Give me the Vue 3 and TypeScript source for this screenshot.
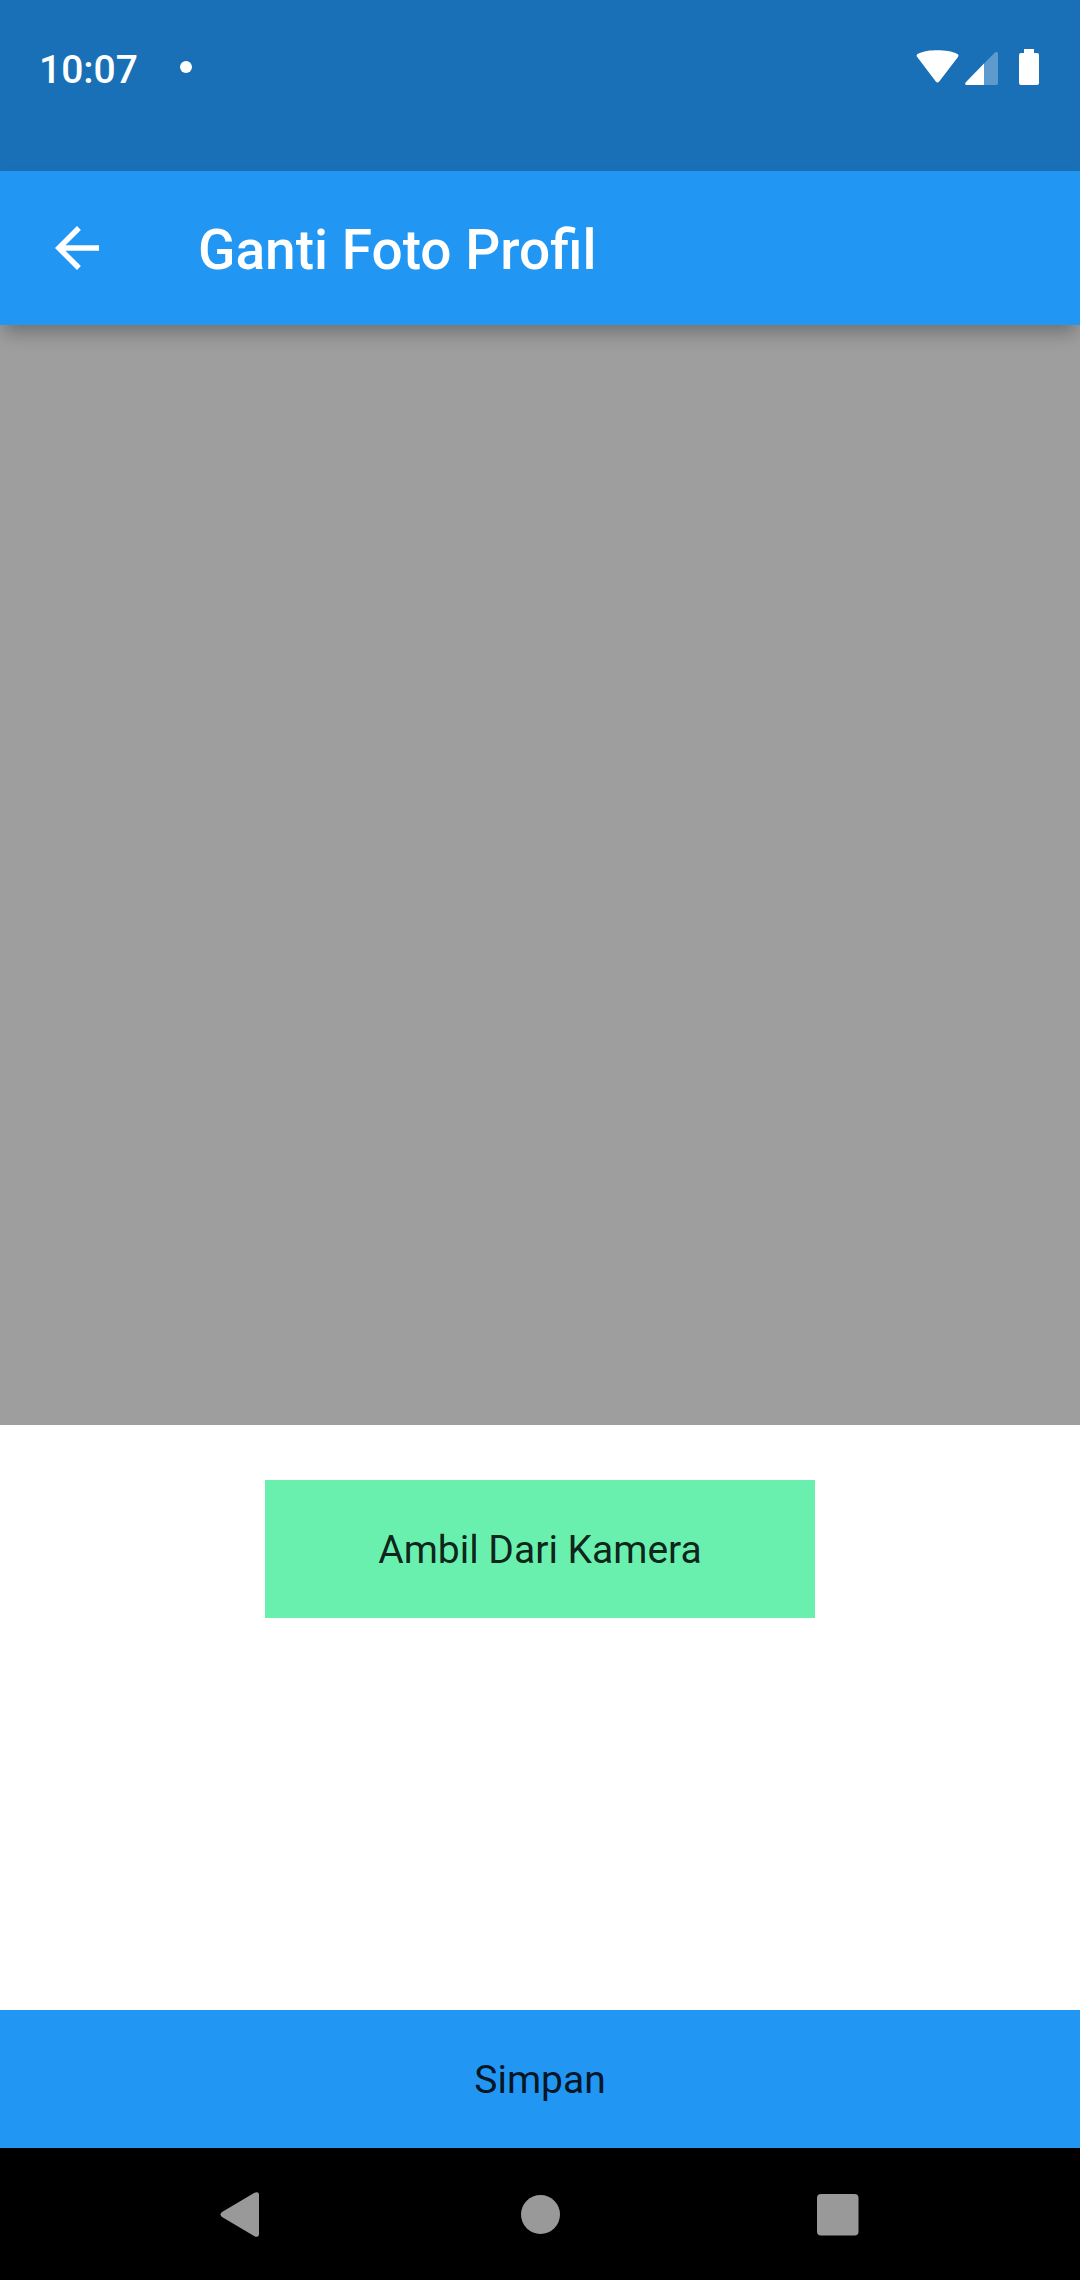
<script setup lang="ts">
import { ref } from 'vue'

const title = 'Ganti Foto Profil'
const time = ref('10:07')
</script>

<template>
  <div class="screen">
    <div class="status-bar">
      <span class="clock">{{ time }}</span>
      <span class="notification-dot"></span>
      <div class="indicators">
        <svg class="wifi" viewBox="0 0 44 46" aria-hidden="true">
          <path d="M1.4 10.200C.3 9 .4 7.900 1.500 7.100 7.500 3.800 14.200 3.200 21.500 3.200s14.500 .8 20 3.900c1.200.8 1.300 1.900.3 3.100L23.200 34.600c-1.100 1.300-2.300 1.300-3.400 0z" fill="#fff" />
        </svg>
        <svg class="signal" viewBox="0 0 34 46" aria-hidden="true">
          <path d="M30 5.600c1.200-1.100 3-.7 3 1.200V36q0 2-2 2H19V16.600z" fill="#5f9ace" />
          <path d="M19 16.600V38H2c-2 0-2.400-1.500-1.200-2.800z" fill="#fff" />
        </svg>
        <svg class="battery" viewBox="0 0 20 46" aria-hidden="true">
          <path d="M5 2h10v4h3q2 0 2 2v28q0 2-2 2H2q-2 0-2-2V8q0-2 2-2h3z" fill="#fff" />
        </svg>
      </div>
    </div>

    <header class="app-bar">
      <button class="back" type="button" aria-label="Kembali">
        <svg viewBox="0 0 24 24" aria-hidden="true">
          <path d="M20 11H7.830l5.590-5.590L12 4l-8 8 8 8 1.410-1.410L7.830 13H20v-2z" fill="#fff" />
        </svg>
      </button>
      <h1>{{ title }}</h1>
    </header>

    <main>
      <div class="photo"></div>
      <button class="action camera" type="button">Ambil Dari Kamera</button>
    </main>

    <button class="action save" type="button">Simpan</button>

    <nav class="system-nav">
      <button type="button" aria-label="Back">
        <svg viewBox="0 0 60 60" aria-hidden="true">
          <path d="M12 28L44.500 8.800Q49 7 49 11V50Q49 54 44.500 52.200L12 33Q9 30.500 12 28z" fill="#999" />
        </svg>
      </button>
      <button type="button" aria-label="Home">
        <svg viewBox="0 0 60 60" aria-hidden="true">
          <circle cx="30.500" cy="30.500" r="19.500" fill="#999" />
        </svg>
      </button>
      <button type="button" aria-label="Recents">
        <svg viewBox="0 0 60 60" aria-hidden="true">
          <rect x="7" y="10" width="41.500" height="41.500" rx="4" fill="#999" />
        </svg>
      </button>
    </nav>
  </div>
</template>

<style>
body {
  margin: 0;
  background: #fff;
}
</style>

<style scoped>
.screen {
  display: flex;
  flex-direction: column;
  min-height: 100vh;
  font-family: Roboto, sans-serif;
  background: #fff;
}

button {
  margin: 0;
  padding: 0;
  border: 0;
  background: none;
  font-family: inherit;
  cursor: pointer;
}

svg {
  display: block;
}

.status-bar {
  display: flex;
  align-items: flex-start;
  box-sizing: border-box;
  height: 171px;
  padding: 47px 41px 0 39px;
  background: #1a70b7;
}

.clock {
  color: #fff;
  font-size: 39px;
  font-weight: 500;
  line-height: 46px;
}

.notification-dot {
  width: 12px;
  height: 12px;
  margin: 14px 0 0 42px;
  border-radius: 50%;
  background: #fff;
}

.indicators {
  display: flex;
  margin-left: auto;
}

.indicators svg {
  height: 46px;
}

.wifi {
  width: 44px;
}

.signal {
  width: 34px;
  margin-left: 5px;
}

.battery {
  width: 20px;
  margin-left: 20px;
}

.app-bar {
  position: relative;
  z-index: 1;
  display: flex;
  align-items: center;
  height: 154px;
  background: #2196f3;
  box-shadow: 0 11px 18px -4px rgba(0, 0, 0, 0.3);
}

.back {
  display: flex;
  align-items: center;
  justify-content: center;
  width: 154px;
  height: 154px;
}

.back svg {
  width: 66px;
  height: 66px;
}

h1 {
  margin: 0 44px;
  padding-top: 4px;
  color: #fff;
  font-size: 55px;
  font-weight: 500;
  line-height: 64px;
}

main {
  display: flex;
  flex: 1;
  flex-direction: column;
  align-items: center;
}

.photo {
  width: 100%;
  aspect-ratio: 54 / 55;
  background: #9e9e9e;
}

.action {
  height: 138px;
  padding-top: 2px;
  color: rgba(0, 0, 0, 0.87);
  font-size: 39px;
  line-height: 46px;
}

.camera {
  width: 550px;
  max-width: 100%;
  margin: 55px 0;
  background: #69f0ae;
}

.save {
  background: #2196f3;
}

.system-nav {
  display: flex;
  justify-content: center;
  height: 132px;
  background: #000;
}

.system-nav button {
  display: flex;
  align-items: center;
  justify-content: center;
  width: 300px;
}

.system-nav svg {
  width: 60px;
  height: 60px;
}
</style>
